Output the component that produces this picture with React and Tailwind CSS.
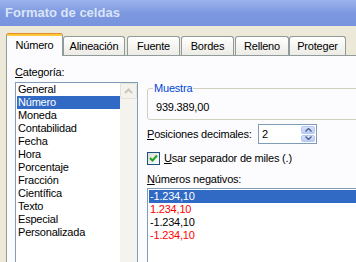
import React from "react";

const categories = [
  "General",
  "Número",
  "Moneda",
  "Contabilidad",
  "Fecha",
  "Hora",
  "Porcentaje",
  "Fracción",
  "Científica",
  "Texto",
  "Especial",
  "Personalizada",
];

const negatives = [
  { text: "-1.234,10", red: false },
  { text: "1.234,10", red: true },
  { text: "-1.234,10", red: false },
  { text: "-1.234,10", red: true },
];

const tabs = [
  { label: "Número", className: "w-[57px]", active: true },
  { label: "Alineación", className: "w-[62px]" },
  { label: "Fuente", className: "w-[53px] ml-[2px]" },
  { label: "Bordes", className: "w-[53px] ml-[1px]" },
  { label: "Relleno", className: "w-[54px] ml-[1px]" },
  { label: "Proteger", className: "w-[57px]" },
];

const Tab = ({ label, className, active }) =>
  active ? (
    <div
      className={`${className} relative z-10 mb-[-1px] flex h-[23px] flex-col rounded-t-[3px] border-x border-[#919b9c] bg-[#fcfcfe]`}
    >
      <div className="h-[1px] rounded-t-[3px] bg-[#e68b2c]" />
      <div className="h-[2px] bg-[#ffc73c]" />
      <div className="flex flex-1 items-center justify-center pb-[2px]">{label}</div>
    </div>
  ) : (
    <div
      className={`${className} flex h-[19px] items-center justify-center rounded-t-[3px] border-x border-t border-[#919b9c] bg-gradient-to-b from-[#ffffff] to-[#ecebe5] pt-[1px]`}
    >
      {label}
    </div>
  );

const ScrollUp = () => (
  <div className="flex h-[16px] w-[17px] items-center justify-center rounded-[2px] border border-[#e5e3d6] bg-[#f3f2ec]">
    <svg width="9" height="6" viewBox="0 0 9 6">
      <path d="M1 5 L4.5 1.5 L8 5" fill="none" stroke="#c9c7ba" strokeWidth="2" />
    </svg>
  </div>
);

const Spinner = () => (
  <div className="flex w-[15px] flex-col gap-[1px] py-[1px] pr-[1px]">
    <div className="flex h-[8px] items-center justify-center rounded-[2px] border border-[#b7c8f0] bg-gradient-to-b from-[#d6e1fb] to-[#b9ccf7]">
      <svg width="7" height="4" viewBox="0 0 7 4">
        <path d="M0.5 3.5 L3.5 0.5 L6.5 3.5" fill="none" stroke="#4d6185" strokeWidth="1.4" />
      </svg>
    </div>
    <div className="flex h-[8px] items-center justify-center rounded-[2px] border border-[#b7c8f0] bg-gradient-to-b from-[#d6e1fb] to-[#b9ccf7]">
      <svg width="7" height="4" viewBox="0 0 7 4">
        <path d="M0.5 0.5 L3.5 3.5 L6.5 0.5" fill="none" stroke="#4d6185" strokeWidth="1.4" />
      </svg>
    </div>
  </div>
);

const Checkbox = () => (
  <div className="flex h-[13px] w-[13px] items-center justify-center border border-[#1c5180] bg-gradient-to-br from-[#dcdcd7] to-[#ffffff]">
    <svg width="9" height="9" viewBox="0 0 9 9">
      <path d="M1 4 L3.5 6.5 L8 1.5" fill="none" stroke="#21a121" strokeWidth="2" />
    </svg>
  </div>
);

export default function App() {
  return (
    <div className="flex h-[262px] w-[356px] flex-col overflow-hidden bg-[#ece9d8] font-['Liberation_Sans',Arial,sans-serif] text-[11px] leading-[13px] tracking-[-0.2px] text-black">
      <div className="flex h-[26px] shrink-0 items-center bg-gradient-to-b from-[#9cb4ec] via-[#7d98e0] to-[#7894de] pl-[5px] pb-[1px] text-[13px] font-bold tracking-normal text-[#dae4f8]">
        Formato de celdas
      </div>

      <div className="flex flex-1 flex-col pl-[6px] pt-[7px]">
        <div className="flex h-[22px] items-end">
          {tabs.map((t) => (
            <Tab key={t.label} {...t} />
          ))}
        </div>

        <div className="flex w-[400px] flex-1 gap-[9px] border-l border-t border-[#919b9c] bg-[#fcfcfe] pl-[8px]">
          <div className="flex w-[123px] shrink-0 flex-col pt-[10px]">
            <div>
              <span className="underline">C</span>ategoría:
            </div>
            <div className="mt-[3px] flex h-[200px] border border-[#7f9db9] bg-white">
              <div className="flex flex-1 flex-col pl-[1px] pt-0">
                {categories.map((c) => (
                  <div
                    key={c}
                    className={`h-[13px] pl-[1px] ${c === "Número" ? "bg-[#316ac5] text-white" : ""}`}
                  >
                    {c}
                  </div>
                ))}
              </div>
              <div className="flex w-[17px] flex-col bg-[#f4f3ee]">
                <ScrollUp />
              </div>
            </div>
          </div>

          <div className="flex w-[240px] flex-col pt-[32px]">
            <div className="relative h-[32px] rounded-[3px] border border-[#d0d0bf] pl-[8px] pt-[12px]">
              <span className="absolute left-[5px] top-[-7px] bg-[#fcfcfe] px-[1px] text-[#0046d5]">
                Muestra
              </span>
              939.389,00
            </div>

            <div className="mt-[4px] flex h-[20px] items-center">
              <div className="w-[111px]">
                <span className="underline">P</span>osiciones decimales:
              </div>
              <div className="flex h-[20px] w-[59px] border border-[#7f9db9] bg-white">
                <div className="flex flex-1 items-center pl-[3px]">2</div>
                <Spinner />
              </div>
            </div>

            <div className="mt-[8px] flex items-center gap-[4px]">
              <Checkbox />
              <div>
                <span className="underline">U</span>sar separador de miles (.)
              </div>
            </div>

            <div className="mt-[8px]">
              <span className="underline">N</span>úmeros negativos:
            </div>

            <div className="mt-[2px] h-[100px] border border-[#7f9db9] bg-white p-[1px]">
              {negatives.map((n, i) => (
                <div
                  key={i}
                  className={`h-[13px] pl-[1px] ${
                    i === 0 ? "bg-[#316ac5] text-white" : n.red ? "text-[#ff0000]" : "text-black"
                  }`}
                >
                  {n.text}
                </div>
              ))}
            </div>
          </div>
        </div>
      </div>
    </div>
  );
}
